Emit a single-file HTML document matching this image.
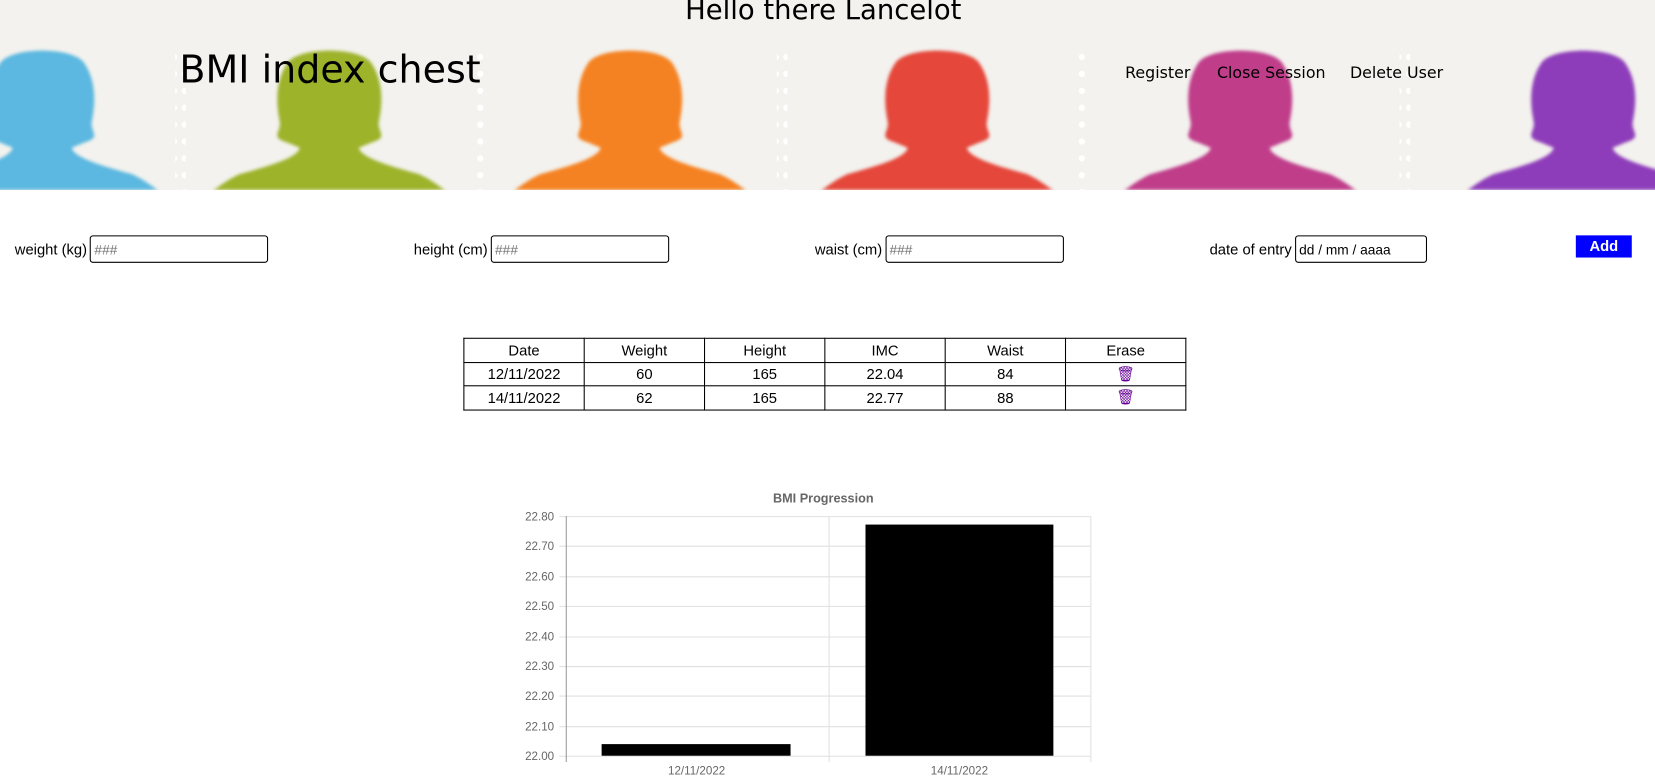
<!DOCTYPE html>
<html><head><meta charset="utf-8"><style>
*{box-sizing:border-box}
html,body{margin:0;width:1655px;height:780px;overflow:hidden;background:#fff}
#w{position:absolute;left:0;top:0;width:1568px;height:739px;transform:scale(1.05548);transform-origin:0 0;font-family:"Liberation Sans",sans-serif;color:#000}
header{position:relative;height:180px;background:#f3f2ee;overflow:hidden}
.h1{position:absolute;top:-5px;left:0;width:1560px;text-align:center;font-family:"DejaVu Sans",sans-serif;font-size:26px}
.title{position:absolute;left:170px;top:46px;font-family:"DejaVu Sans",sans-serif;font-size:36px}
.nav{position:absolute;top:60px;font-family:"DejaVu Sans",sans-serif;font-size:15px}
.row{position:absolute;top:223px;font-size:14px;display:flex;align-items:center}
.row input{width:169px;height:26px;border:1px solid #000;border-radius:3px;margin-left:3px;font-size:13px;padding:2px 3px;font-family:"Liberation Sans",sans-serif}
table{position:absolute;left:439px;top:320px;border-collapse:collapse;font-size:14px}
td{border:1px solid #000;width:114px;height:22.5px;text-align:center;padding:0}
.btn{position:absolute;left:1493px;top:223px;width:53px;height:21px;background:#00f;color:#fff;font-weight:bold;font-size:14px;text-align:center;line-height:21px}
</style></head><body><div id="w">
<header>
<svg width="1568" height="180" style="position:absolute;left:0;top:0">
<defs>
<filter id="b"><feGaussianBlur stdDeviation="1.5"/></filter>
<path id="p" d="M -40 60 C -30 44, 30 44, 40 60 C 52 78, 50 100, 47 115 C 45 125, 57 130, 40 135 L 28 140 C 30 150, 60 158, 85 165 C 100 172, 105 178, 110 180 L -110 180 C -105 178,-100 172,-85 165 C -60 158,-30 150,-28 140 L -40 135 C -57 130,-45 125,-47 115 C -50 100,-52 78,-40 60 Z"/>
<pattern id="d" width="10" height="16" patternUnits="userSpaceOnUse"><circle cx="5" cy="6" r="3" fill="#fff"/></pattern>
</defs>
<rect x="166" y="45" width="10" height="135" fill="url(#d)"/>
<rect x="451" y="45" width="10" height="135" fill="url(#d)"/>
<rect x="736" y="45" width="10" height="135" fill="url(#d)"/>
<rect x="1021" y="45" width="10" height="135" fill="url(#d)"/>
<rect x="1326" y="45" width="10" height="135" fill="url(#d)"/>
<g filter="url(#b)">
<use href="#p" x="40" fill="#5bb8e0"/>
<use href="#p" x="312" fill="#9db32a"/>
<use href="#p" x="597" fill="#f58220"/>
<use href="#p" x="888" fill="#e5463a"/>
<use href="#p" x="1175" fill="#c03d8a"/>
<use href="#p" x="1500" fill="#8e3dba"/>
</g>
</svg>
<div class="h1">Hello there Lancelot</div>
<div class="title">BMI index chest</div>
<div class="nav" style="left:1066px">Register</div>
<div class="nav" style="left:1153px">Close Session</div>
<div class="nav" style="left:1279px">Delete User</div>
</header>
<div class="row" style="left:14px">weight (kg)<input placeholder="###"></div>
<div class="row" style="left:392px">height (cm)<input placeholder="###"></div>
<div class="row" style="left:772px">waist (cm)<input placeholder="###"></div>
<div class="row" style="left:1146px">date of entry<input style="width:125px" value="dd / mm / aaaa"></div>
<div class="btn">Add</div>
<table>
<tr><td>Date</td><td>Weight</td><td>Height</td><td>IMC</td><td>Waist</td><td>Erase</td></tr>
<tr><td>12/11/2022</td><td>60</td><td>165</td><td>22.04</td><td>84</td><td style="color:#609">&#128465;</td></tr>
<tr><td>14/11/2022</td><td>62</td><td>165</td><td>22.77</td><td>88</td><td style="color:#609">&#128465;</td></tr>
</table>
<svg width="1568" height="739" style="position:absolute;left:0;top:0" font-family="Liberation Sans,sans-serif">
<text x="780" y="476" text-anchor="middle" font-size="12" font-weight="bold" fill="#666">BMI Progression</text>
<g stroke="#e0e0e0" stroke-width="1">
<line x1="530" x2="1033" y1="489.5" y2="489.5"/><line x1="530" x2="1033" y1="517.5" y2="517.5"/>
<line x1="530" x2="1033" y1="546.5" y2="546.5"/><line x1="530" x2="1033" y1="574.5" y2="574.5"/>
<line x1="530" x2="1033" y1="603.5" y2="603.5"/><line x1="530" x2="1033" y1="631.5" y2="631.5"/>
<line x1="530" x2="1033" y1="659.5" y2="659.5"/><line x1="530" x2="1033" y1="688.5" y2="688.5"/>
<line x1="530" x2="1033" y1="716.5" y2="716.5"/>
<line x1="785.5" x2="785.5" y1="489" y2="722"/><line x1="1033.5" x2="1033.5" y1="489" y2="722"/>
</g>
<line x1="536.5" x2="536.5" y1="489" y2="722" stroke="#999"/>
<g font-size="11" fill="#666" text-anchor="end">
<text x="525" y="493">22.80</text><text x="525" y="521">22.70</text><text x="525" y="550">22.60</text>
<text x="525" y="578">22.50</text><text x="525" y="607">22.40</text><text x="525" y="635">22.30</text>
<text x="525" y="663">22.20</text><text x="525" y="692">22.10</text><text x="525" y="720">22.00</text>
</g>
<rect x="570" y="705" width="179" height="11" fill="#000"/>
<rect x="820" y="497" width="178" height="219" fill="#000"/>
<g font-size="11" fill="#666" text-anchor="middle"><text x="660" y="734">12/11/2022</text><text x="909" y="734">14/11/2022</text></g>
</svg>
</div></body></html>
